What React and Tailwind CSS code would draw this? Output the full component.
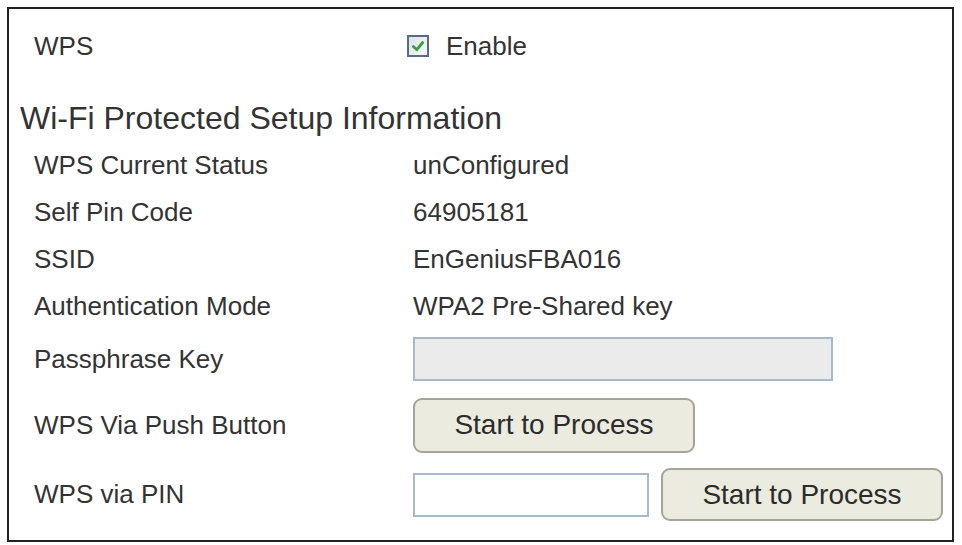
const rows = [
  ['WPS Current Status', 'unConfigured'],
  ['Self Pin Code', '64905181'],
  ['SSID', 'EnGeniusFBA016'],
  ['Authentication Mode', 'WPA2 Pre-Shared key'],
]

function Check() {
  return (
    <span className="flex h-[22px] w-[22px] items-center justify-center border-2 border-[#5a6a80] bg-gradient-to-br from-[#dde2e8] to-[#f7f8fa]">
      <svg viewBox="0 0 12 12" width="14" height="14" aria-hidden="true">
        <path d="M2 6.5 5 9.2 10 3" fill="none" stroke="#2ea43a" strokeWidth="2.4" strokeLinecap="round" strokeLinejoin="round" />
      </svg>
    </span>
  )
}

function ProcessButton({ className }) {
  return (
    <button
      type="button"
      className={`flex items-center justify-center rounded-[9px] border-2 border-[#a4a497] bg-[#ecebdf] text-[28px] text-[#2b2b2b] ${className}`}
    >
      Start to Process
    </button>
  )
}

export default function App() {
  return (
    <div className="h-[545px] w-[962px] bg-white pl-[7px] pt-[7px] font-['Liberation_Sans',Arial,sans-serif] text-[26px] text-[#333]">
      <div className="flex h-[535px] w-[947px] flex-col border-2 border-[#222]">
        <div className="flex h-[74px] items-center pl-[25px]">
          <div className="w-[373px]">WPS</div>
          <label className="flex items-center gap-[17px]">
            <Check />
            <span>Enable</span>
          </label>
        </div>

        <div className="h-[59px] pl-[11px] pt-[17px] text-[32px] leading-[36px]">
          Wi-Fi Protected Setup Information
        </div>

        {rows.map(([label, value]) => (
          <div key={label} className="flex h-[47px] items-center pl-[25px]">
            <div className="w-[379px]">{label}</div>
            <div>{value}</div>
          </div>
        ))}

        <div className="flex h-[58px] items-center pl-[25px]">
          <div className="w-[379px]">Passphrase Key</div>
          <div className="h-[44px] w-[420px] border-2 border-[#a9b8ca] bg-[#ebebeb]" />
        </div>

        <div className="flex h-[74px] items-center pl-[25px]">
          <div className="w-[379px]">WPS Via Push Button</div>
          <ProcessButton className="h-[55px] w-[282px]" />
        </div>

        <div className="flex h-[65px] items-center pl-[25px]">
          <div className="w-[379px]">WPS via PIN</div>
          <div className="h-[44px] w-[236px] border-2 border-[#a9b8ca] bg-white" />
          <ProcessButton className="ml-[12px] h-[53px] w-[282px]" />
        </div>
      </div>
    </div>
  )
}
